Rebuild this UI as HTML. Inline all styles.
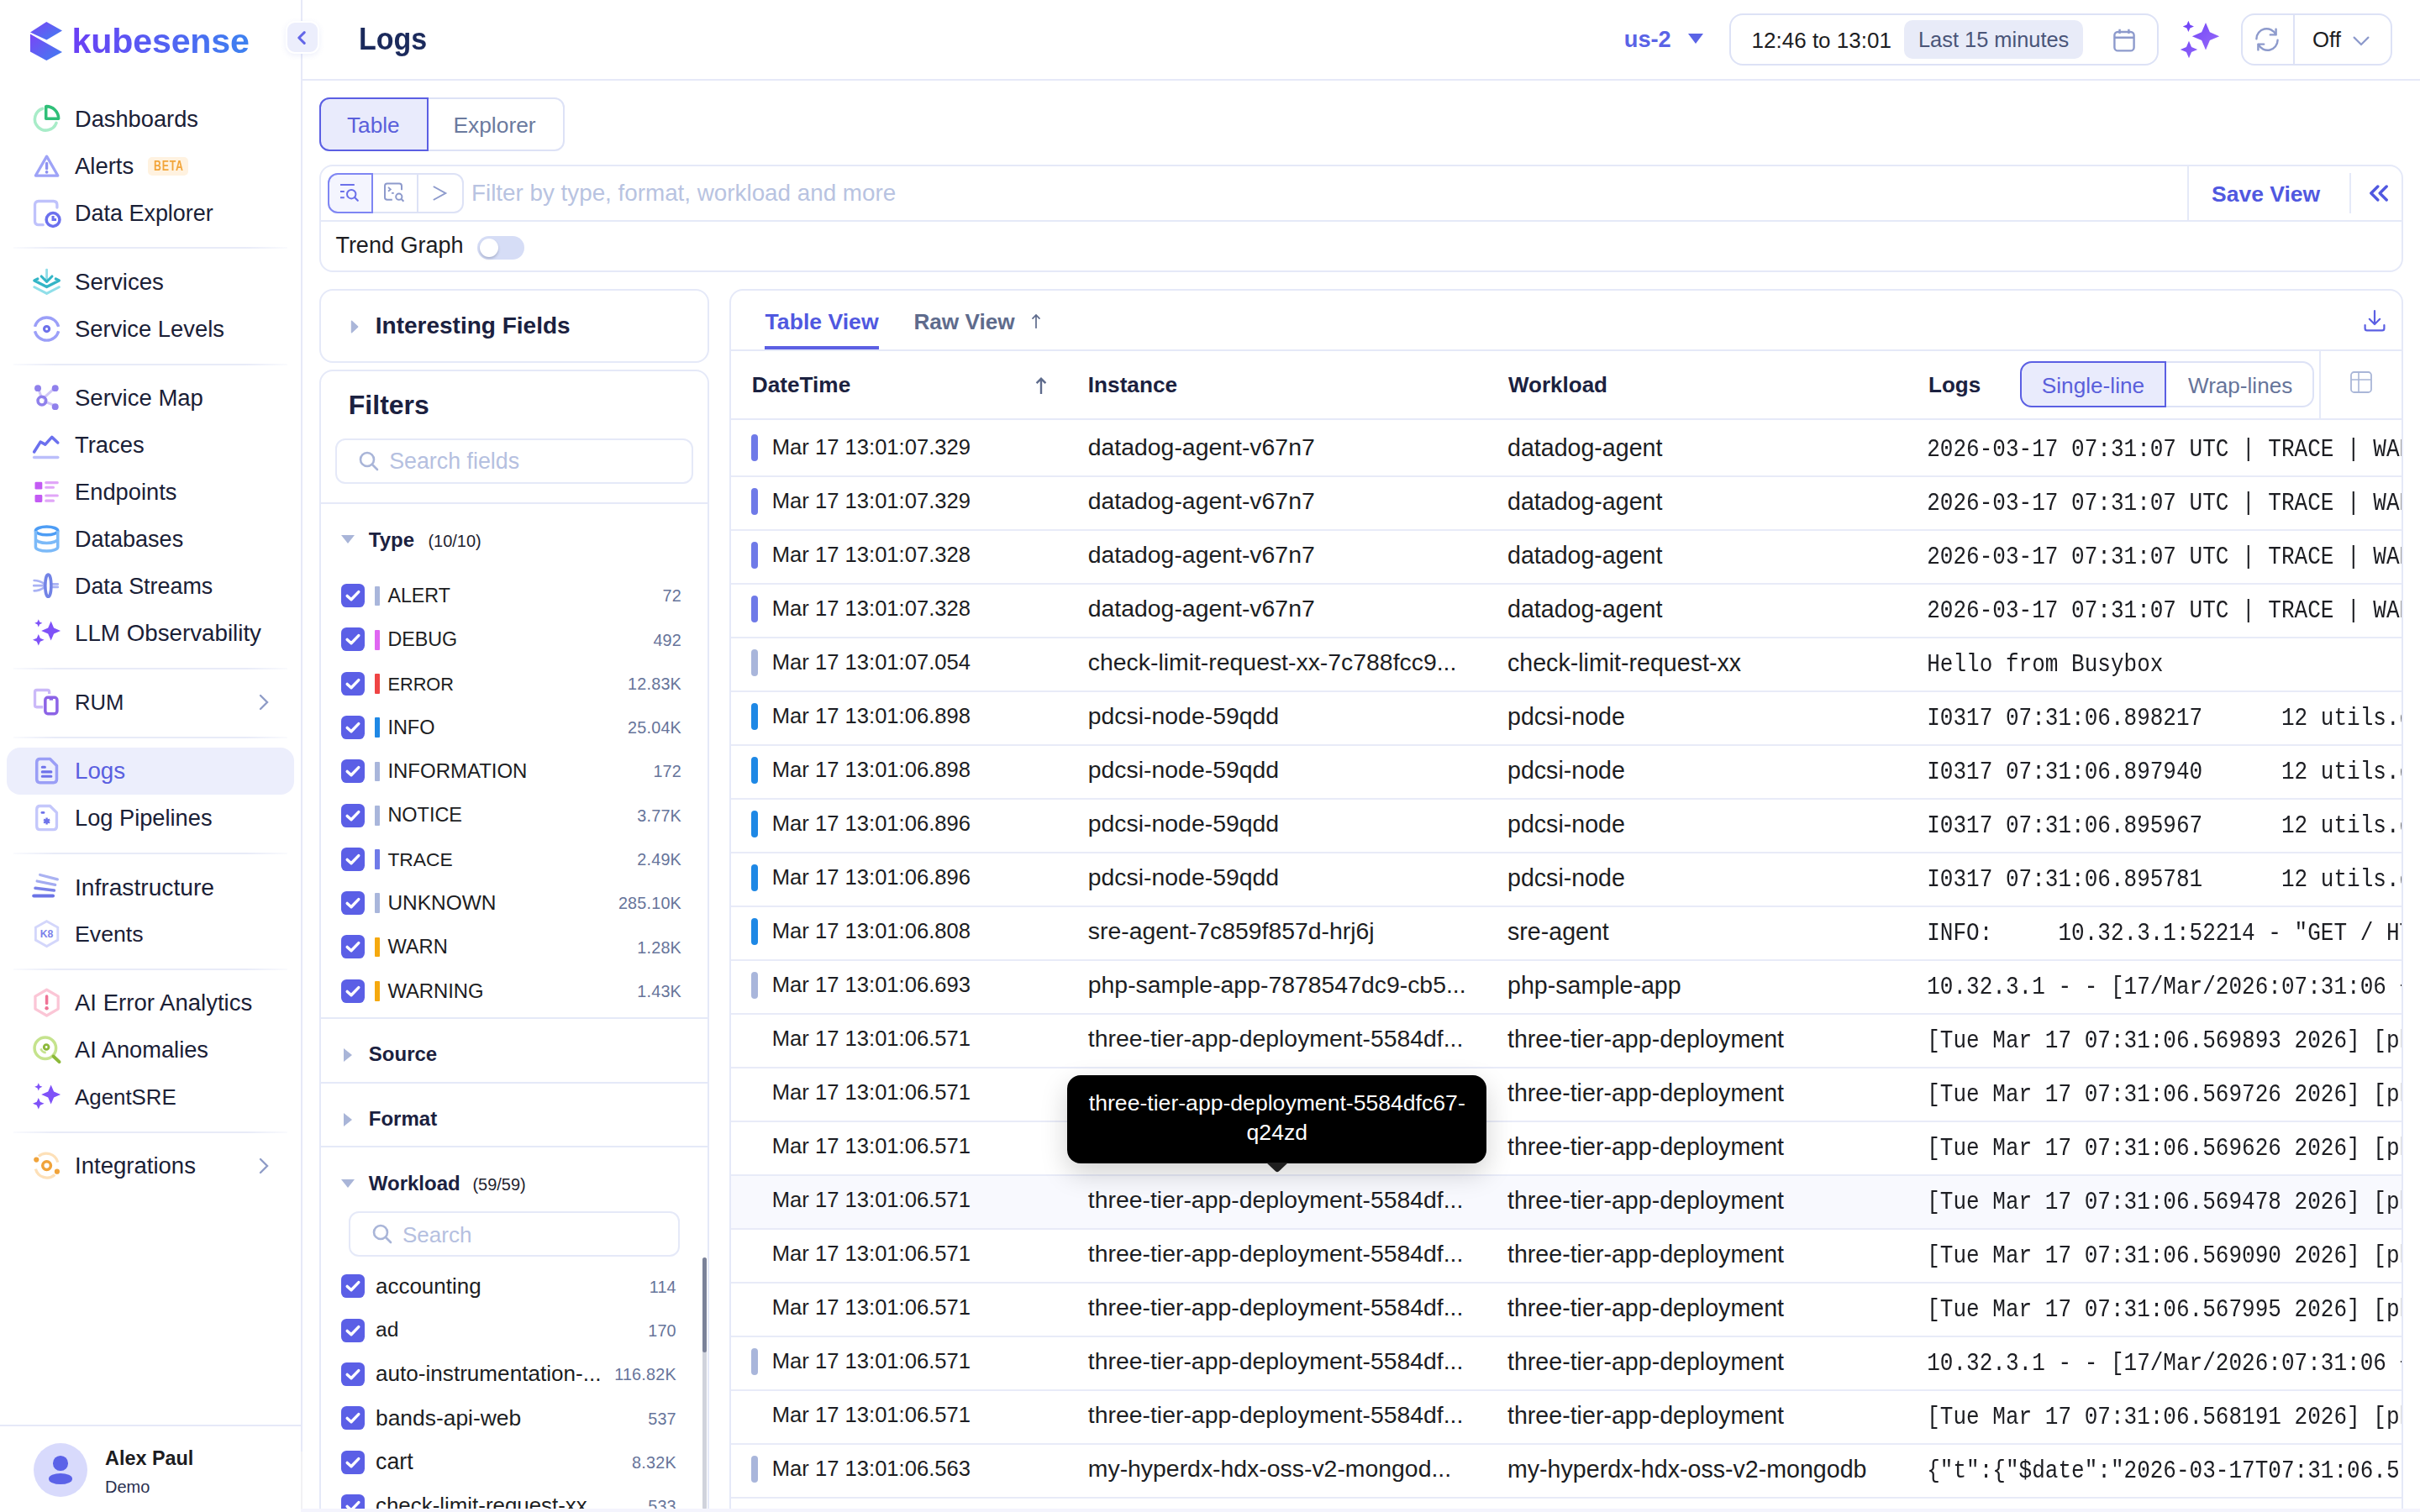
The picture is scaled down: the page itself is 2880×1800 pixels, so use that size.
<!DOCTYPE html>
<html><head><meta charset="utf-8">
<style>
*{box-sizing:border-box;margin:0;padding:0}
html,body{width:2880px;height:1800px;overflow:hidden;background:#fff}
body{font-family:"Liberation Sans",sans-serif;color:#1b2036}
#root{position:relative;width:1440px;height:900px;zoom:2;overflow:hidden;background:#fff}
.abs{position:absolute}
.t{position:absolute;white-space:nowrap;line-height:1}
svg{display:block}
/* sidebar */
#side{position:absolute;left:0;top:0;width:180px;height:900px;border-right:1px solid #e6e9f8;background:#fff}
.nav{position:absolute;left:0;width:179px;height:28px}
.nav .ic{position:absolute;left:19.2px;top:5.2px;width:17.6px;height:17.6px}
.nav .lb{position:absolute;left:44.5px;top:7px;font-size:13.5px;line-height:14px;color:#1a2036;white-space:nowrap}
.sep{position:absolute;left:8px;width:163px;height:1px;background:linear-gradient(90deg,rgba(230,234,248,0.2),#e8ebf8 15%,#e8ebf8 85%,rgba(230,234,248,0.2))}
.chev{position:absolute;left:154px;top:9px}
</style></head>
<body><div id="root">

<!-- SIDEBAR -->
<div id="side">
  <!-- logo -->
  <svg class="abs" style="left:18px;top:13px" width="19" height="23" viewBox="0 0 38 46">
    <defs><linearGradient id="lg1" x1="0" y1="0" x2="1" y2="1"><stop offset="0" stop-color="#7a45f6"/><stop offset="1" stop-color="#3f7ff0"/></linearGradient></defs>
    <path d="M0 12.5 L19.3 0 L38 10.5 L19.5 21.5 Z" fill="url(#lg1)"/>
    <path d="M0 14.5 L38 36 L19.3 46 L0 35.5 Z" fill="url(#lg1)"/>
  </svg>
  <div class="t" style="left:42.8px;top:13px;font-size:20.6px;font-weight:700;letter-spacing:-0.1px;background:linear-gradient(90deg,#6a3ff5,#3d82f0);-webkit-background-clip:text;background-clip:text;color:transparent;line-height:23px">kubesense</div>

  <div class="nav" style="top:57px"><svg class="ic" viewBox="0 0 16 16"><path d="M13.2 10.2 A6 6 0 1 1 5.8 2.4" fill="none" stroke="#a8ecc8" stroke-width="1.6" stroke-linecap="round"/><path d="M7.6 1.2 A6.6 6.6 0 0 1 14.4 7.8 L7.6 7.8 Z" fill="none" stroke="#2fbf78" stroke-width="1.6" stroke-linejoin="round"/></svg><div class="lb" style="font-size:13.63px;top:6.95px;">Dashboards</div></div>
  <div class="nav" style="top:85px"><svg class="ic" viewBox="0 0 16 16"><path d="M8 2.8 L14 13.2 H2 Z" fill="none" stroke="#9ea3f7" stroke-width="1.5" stroke-linejoin="round"/><path d="M8 6.6 V9.4" stroke="#8c90f0" stroke-width="1.5" stroke-linecap="round"/><circle cx="8" cy="11.3" r="0.85" fill="#8c90f0"/></svg><div class="lb" style="font-size:13.73px;top:6.92px;">Alerts</div>
    <div class="abs" style="left:88px;top:8.5px;width:24px;height:11px;background:#fff2e0;border-radius:2.5px"></div>
    <div class="t" style="left:91.7px;top:9.9px;font-size:7.9px;font-weight:700;color:#f2a53a;letter-spacing:0.5px;transform:scaleX(0.78);transform-origin:left">BETA</div>
  </div>
  <div class="nav" style="top:113px"><svg class="ic" viewBox="0 0 16 16"><path d="M6 14.4 H3.6 Q1.6 14.4 1.6 12.4 V3.6 Q1.6 1.6 3.6 1.6 H11.6 Q13.6 1.6 13.6 3.6 V5" fill="none" stroke="#bfc2fb" stroke-width="1.5" stroke-linecap="round"/><circle cx="11.4" cy="11.6" r="3.6" fill="none" stroke="#6b70ee" stroke-width="1.6"/><path d="M11.4 9.6 V11.6 H13.2" fill="none" stroke="#6b70ee" stroke-width="1.4"/></svg><div class="lb" style="font-size:13.48px;top:7.01px;">Data Explorer</div></div>
  <div class="sep" style="top:147px"></div>

  <div class="nav" style="top:154px"><svg class="ic" viewBox="0 0 16 16"><path d="M8 1.4 V6.6" fill="none" stroke="#8fdde8" stroke-width="1.3" stroke-linecap="round"/><path d="M5.1 5 L8 7.9 L10.9 5" fill="none" stroke="#33b5c6" stroke-width="1.4" stroke-linecap="round" stroke-linejoin="round"/><path d="M3.1 6.4 L1.3 7.3 L8 10.7 L14.7 7.3 L12.9 6.4" fill="none" stroke="#33b5c6" stroke-width="1.5" stroke-linecap="round" stroke-linejoin="round"/><path d="M1.3 10.8 L8 14.3 L14.7 10.8" fill="none" stroke="#90dfe9" stroke-width="1.4" stroke-linecap="round" stroke-linejoin="round"/></svg><div class="lb" style="font-size:13.82px;top:6.89px;">Services</div></div>
  <div class="nav" style="top:182px"><svg class="ic" viewBox="0 0 16 16"><path d="M1.6 6.8 A6.6 6.6 0 0 1 14.4 6.8 M14.4 9.2 A6.6 6.6 0 0 1 1.6 9.2" fill="none" stroke="#9b9ff8" stroke-width="1.5"/><circle cx="8" cy="8" r="1.4" fill="none" stroke="#6e72ea" stroke-width="1.4"/></svg><div class="lb" style="font-size:13.68px;top:6.94px;">Service Levels</div></div>
  <div class="sep" style="top:216.5px"></div>

  <div class="nav" style="top:223px"><svg class="ic" viewBox="0 0 16 16"><path d="M3.5 3 L5 7.5 M5.8 8.6 L12.5 2.6 M6.4 9.8 L12.4 12.2" stroke="#d1c8f7" stroke-width="1.4"/><circle cx="3.2" cy="2.8" r="1.8" fill="#8f80ec"/><circle cx="12.6" cy="2.8" r="1.8" fill="#8f80ec"/><circle cx="12.6" cy="12.8" r="1.8" fill="#8f80ec"/><circle cx="5.4" cy="9.6" r="2.2" fill="none" stroke="#8f80ec" stroke-width="1.6"/></svg><div class="lb" style="font-size:13.76px;top:6.91px;">Service Map</div></div>
  <div class="nav" style="top:251px"><svg class="ic" viewBox="0 0 16 16"><path d="M1.2 11.8 L4.6 6.4 L7.2 7.8 L10.8 3.8 L14 6.8" fill="none" stroke="#6b70ee" stroke-width="1.6" stroke-linejoin="round" stroke-linecap="round"/><path d="M1.2 14.8 H14" stroke="#bbbefb" stroke-width="1.6" stroke-linecap="round"/></svg><div class="lb" style="font-size:13.71px;top:6.93px;">Traces</div></div>
  <div class="nav" style="top:279px"><svg class="ic" viewBox="0 0 16 16"><rect x="1.6" y="2.6" width="4" height="4" rx="0.6" fill="#c35af4"/><rect x="1.6" y="9.6" width="4" height="4" rx="0.6" fill="#c35af4"/><path d="M7.6 3 H13.8 M7.6 5.6 H11.6 M7.6 10 H13.8 M7.6 12.8 H11.6" stroke="#e1a6f8" stroke-width="1.4" stroke-linecap="round"/></svg><div class="lb" style="font-size:13.65px;top:6.95px;">Endpoints</div></div>
  <div class="nav" style="top:307px"><svg class="ic" viewBox="0 0 16 16"><ellipse cx="8" cy="3.6" rx="6" ry="2.2" fill="none" stroke="#4d9df5" stroke-width="1.6"/><path d="M2 3.6 V12.4 A6 2.2 0 0 0 14 12.4 V3.6 M2 8 A6 2.2 0 0 0 14 8" fill="none" stroke="#7cbaf8" stroke-width="1.6"/></svg><div class="lb" style="font-size:13.51px;top:7.00px;">Databases</div></div>
  <div class="nav" style="top:335px"><svg class="ic" viewBox="0 0 16 16"><path d="M1.2 5 Q4 5 6.6 6.8 M1 7.8 H7 M1.2 10.6 Q4 10.6 6.6 8.8 M10.6 7 H14 M10.6 8.6 H14" fill="none" stroke="#a9b2f4" stroke-width="1.2" stroke-linecap="round"/><ellipse cx="8.8" cy="7.8" rx="1.6" ry="6" fill="none" stroke="#7283e6" stroke-width="1.6"/></svg><div class="lb" style="font-size:13.43px;top:7.02px;">Data Streams</div></div>
  <div class="nav" style="top:363px"><svg class="ic" viewBox="0 0 16 16" style="overflow:visible"><path d="M10.30 1.60 L11.86 5.24 L15.50 6.80 L11.86 8.36 L10.30 12.00 L8.74 8.36 L5.10 6.80 L8.74 5.24Z M3.55 0.55 L4.18 2.02 L5.65 2.65 L4.18 3.28 L3.55 4.75 L2.92 3.28 L1.45 2.65 L2.92 2.02Z M3.55 8.60 L4.48 10.77 L6.65 11.70 L4.48 12.63 L3.55 14.80 L2.62 12.63 L0.45 11.70 L2.62 10.77Z" fill="#7f52f8"/></svg><div class="lb" style="font-size:13.87px;top:6.87px;">LLM Observability</div></div>
  <div class="sep" style="top:397.5px"></div>

  <div class="nav" style="top:404px"><svg class="ic" viewBox="0 0 16 16"><path d="M9.4 3.6 V2.6 Q9.4 1.6 8.4 1.6 H2.6 Q1.6 1.6 1.6 2.6 V9.8 Q1.6 10.8 2.6 10.8 H6" fill="none" stroke="#cbb9f8" stroke-width="1.5"/><rect x="7.2" y="5.6" width="6.4" height="8.8" rx="1.4" fill="none" stroke="#8c63e6" stroke-width="1.6"/><path d="M9.4 6.4 H11.4" stroke="#8c63e6" stroke-width="1.4"/></svg><div class="lb" style="font-size:12.82px;top:7.24px;">RUM</div><svg class="chev" width="6" height="10" viewBox="0 0 6 10"><path d="M1 1 L5 5 L1 9" fill="none" stroke="#8f9cc7" stroke-width="1.2" stroke-linecap="round"/></svg></div>
  <div class="sep" style="top:438.5px"></div>

  <div class="abs" style="left:4px;top:445px;width:171px;height:28px;border-radius:8px;background:#eceefc"></div>
  <div class="nav" style="top:445px"><svg class="ic" viewBox="0 0 16 16"><path d="M9.8 1.6 H4.4 Q2.6 1.6 2.6 3.4 V12.6 Q2.6 14.4 4.4 14.4 H11.6 Q13.4 14.4 13.4 12.6 V5.2 Z" fill="none" stroke="#9a9ef6" stroke-width="1.6" stroke-linejoin="round"/><path d="M5.6 6 H7 M5.6 8.6 H10.4 M5.6 11 H10.4" stroke="#6e72ea" stroke-width="1.4" stroke-linecap="round"/></svg><div class="lb" style="font-size:13.88px;top:6.87px;color:#5a5fe0">Logs</div></div>
  <div class="nav" style="top:473px"><svg class="ic" viewBox="0 0 16 16"><path d="M9.8 1.6 H4.4 Q2.6 1.6 2.6 3.4 V12.6 Q2.6 14.4 4.4 14.4 H11.6 Q13.4 14.4 13.4 12.6 V5.2 Z" fill="none" stroke="#c4c7fb" stroke-width="1.5" stroke-linejoin="round"/><path d="M5.4 5.2 H6.4" stroke="#6e72ea" stroke-width="1.2" stroke-linecap="round"/><path d="M8 8 V11.6 M6.4 8.9 L9.6 10.7 M6.4 10.7 L9.6 8.9" stroke="#6e72ea" stroke-width="1.1"/></svg><div class="lb" style="font-size:13.62px;top:6.96px;">Log Pipelines</div></div>
  <div class="sep" style="top:507.5px"></div>

  <div class="nav" style="top:514px"><svg class="ic" viewBox="0 0 16 16"><path d="M4.4 1.6 L13.8 4" stroke="#aab2f2" stroke-width="1.5" stroke-linecap="round"/><path d="M2.8 5 L12.6 7" stroke="#a3abf1" stroke-width="1.5" stroke-linecap="round"/><path d="M1.8 8.8 L12 10" stroke="#7a82e8" stroke-width="1.6" stroke-linecap="round"/><path d="M1 13 H11.4" stroke="#6b73e6" stroke-width="1.8" stroke-linecap="round"/></svg><div class="lb" style="font-size:14.09px;top:6.80px;">Infrastructure</div></div>
  <div class="nav" style="top:542px"><svg class="ic" viewBox="0 0 16 16"><path d="M8 1.2 L14 4.6 V11.4 L8 14.8 L2 11.4 V4.6 Z" fill="none" stroke="#d3d6fb" stroke-width="1.3"/><text x="8" y="10.2" text-anchor="middle" font-size="5.6" font-weight="700" fill="#7d82ea" font-family="Liberation Sans">K8</text></svg><div class="lb" style="font-size:13.35px;top:7.05px;">Events</div></div>
  <div class="sep" style="top:576.5px"></div>

  <div class="nav" style="top:583px"><svg class="ic" viewBox="0 0 16 16"><path d="M8 1 L14.2 4.6 V11.4 L8 15 L1.8 11.4 V4.6 Z" fill="none" stroke="#fbc6d6" stroke-width="1.5" stroke-linejoin="round"/><path d="M8 4.6 V8.4" stroke="#ef7396" stroke-width="1.6" stroke-linecap="round"/><circle cx="8" cy="11" r="1" fill="#ef7396"/></svg><div class="lb" style="font-size:13.78px;top:6.90px;">AI Error Analytics</div></div>
  <div class="nav" style="top:611px"><svg class="ic" viewBox="0 0 16 16"><circle cx="7.2" cy="7.2" r="5.8" fill="none" stroke="#c5e38d" stroke-width="1.6"/><path d="M11.6 11.6 L14.8 14.6" stroke="#8cb93a" stroke-width="1.8" stroke-linecap="round"/><circle cx="7.8" cy="6.6" r="1.3" fill="none" stroke="#8cb93a" stroke-width="1.3"/><path d="M4.8 7.4 Q5.4 9.4 7.6 9.6" fill="none" stroke="#c5e38d" stroke-width="1.2"/></svg><div class="lb" style="font-size:13.62px;top:6.96px;">AI Anomalies</div></div>
  <div class="nav" style="top:639px"><svg class="ic" viewBox="0 0 16 16" style="overflow:visible"><path d="M10.30 1.60 L11.86 5.24 L15.50 6.80 L11.86 8.36 L10.30 12.00 L8.74 8.36 L5.10 6.80 L8.74 5.24Z M3.55 0.55 L4.18 2.02 L5.65 2.65 L4.18 3.28 L3.55 4.75 L2.92 3.28 L1.45 2.65 L2.92 2.02Z M3.55 8.60 L4.48 10.77 L6.65 11.70 L4.48 12.63 L3.55 14.80 L2.62 12.63 L0.45 11.70 L2.62 10.77Z" fill="#7f52f8"/></svg><div class="lb" style="font-size:12.93px;top:7.20px;">AgentSRE</div></div>
  <div class="sep" style="top:673.5px"></div>

  <div class="nav" style="top:680px"><svg class="ic" viewBox="0 0 16 16"><path d="M3.6 3 A6.4 6.4 0 0 1 14 6.2 M12.4 13 A6.4 6.4 0 0 1 2 9.8" fill="none" stroke="#fde0b8" stroke-width="1.5"/><circle cx="8" cy="8" r="2.2" fill="none" stroke="#f0a33a" stroke-width="1.6"/><circle cx="2.4" cy="4.8" r="1.4" fill="#f0a33a"/><circle cx="13.6" cy="11.2" r="1.4" fill="#f0a33a"/></svg><div class="lb" style="font-size:13.78px;top:6.90px;">Integrations</div><svg class="chev" width="6" height="10" viewBox="0 0 6 10"><path d="M1 1 L5 5 L1 9" fill="none" stroke="#8f9cc7" stroke-width="1.2" stroke-linecap="round"/></svg></div>

  <!-- footer -->
  <div class="abs" style="left:0;top:848px;width:179px;height:1px;background:#e6e9f8"></div>
  <div class="abs" style="left:20px;top:859px;width:32px;height:32px;border-radius:50%;background:#d8dafc"></div>
  <div class="abs" style="left:31.6px;top:866.7px;width:8.8px;height:8.8px;border-radius:50%;background:#5b62e8"></div>
  <div class="abs" style="left:29px;top:877.2px;width:14px;height:6.3px;border-radius:50%;background:#5b62e8"></div>
  <div class="t" style="left:62.5px;top:862.7px;font-size:11.7px;font-weight:700;color:#1c1c1f">Alex Paul</div>
  <div class="t" style="left:62.5px;top:880px;font-size:10px;color:#2a3050">Demo</div>
</div>

<!-- collapse button -->
<div class="abs" style="left:169.8px;top:12.6px;width:20px;height:19.6px;border-radius:5.5px;background:#eceefc;border:1px solid #fff;box-shadow:0 1px 3px rgba(110,120,220,0.12)"></div>
<svg class="abs" style="left:176.5px;top:18.5px" width="6" height="8" viewBox="0 0 6 8"><path d="M4.6 0.8 L1.4 4 L4.6 7.2" fill="none" stroke="#6366e8" stroke-width="1.5" stroke-linecap="round" stroke-linejoin="round"/></svg>

<!-- MAIN -->

<!-- HEADER -->
<div class="abs" style="left:180px;top:47px;width:1260px;height:1px;background:#e6e9f8"></div>
<div class="t" style="left:213.3px;top:14.35px;font-size:18.3px;font-weight:700;color:#1b2a5c;transform:scaleX(0.93);transform-origin:left">Logs</div>

<div class="t" style="left:966.4px;top:16.4px;font-size:13.6px;font-weight:700;color:#5a63e6">us-2</div>
<svg class="abs" style="left:1004.5px;top:20px" width="9" height="6" viewBox="0 0 9 6"><path d="M0 0 H9 L4.5 6 Z" fill="#5a63e6"/></svg>

<div class="abs" style="left:1029px;top:7.8px;width:255.5px;height:31px;border:1px solid #dde2f6;border-radius:8px"></div>
<div class="t" style="left:1042.3px;top:17.5px;font-size:13px;color:#1c1d22">12:46 to 13:01</div>
<div class="abs" style="left:1133px;top:11.8px;width:106.5px;height:23.3px;border-radius:5px;background:#e8ebf8"></div>
<div class="t" style="left:1141.5px;top:17.7px;font-size:12.7px;color:#4a5578">Last 15 minutes</div>
<svg class="abs" style="left:1257.5px;top:17px" width="13" height="14" viewBox="0 0 13 14"><rect x="0.7" y="2" width="11.6" height="11.2" rx="2" fill="none" stroke="#8d9acc" stroke-width="1.2"/><path d="M0.7 5.4 H12.3 M3.8 0.4 V3 M9.2 0.4 V3" stroke="#8d9acc" stroke-width="1.2"/></svg>

<svg class="abs" style="left:1296px;top:12px" width="26" height="24" viewBox="0 0 26 24" style="overflow:visible"><defs><linearGradient id="sp" x1="0" y1="0" x2="1" y2="1"><stop offset="0" stop-color="#6a3df6"/><stop offset="1" stop-color="#9e72f9"/></linearGradient></defs><path d="M16.50 1.50 L18.93 7.17 L24.60 9.60 L18.93 12.03 L16.50 17.70 L14.07 12.03 L8.40 9.60 L14.07 7.17Z M6.20 0.40 L7.19 2.71 L9.50 3.70 L7.19 4.69 L6.20 7.00 L5.21 4.69 L2.90 3.70 L5.21 2.71Z M6.50 12.40 L8.03 15.97 L11.60 17.50 L8.03 19.03 L6.50 22.60 L4.97 19.03 L1.40 17.50 L4.97 15.97Z" fill="url(#sp)"/></svg>

<div class="abs" style="left:1333.5px;top:7.8px;width:90px;height:31px;border:1px solid #dde2f6;border-radius:8px"></div>
<div class="abs" style="left:1364.3px;top:8px;width:1px;height:30.5px;background:#dde2f6"></div>
<svg class="abs" style="left:1341.5px;top:16.5px" width="15" height="14" viewBox="0 0 15 14"><path d="M1.2 6.6 A6 6 0 0 1 12.6 4 M13.8 7.4 A6 6 0 0 1 2.4 10" fill="none" stroke="#8d9acc" stroke-width="1.2" stroke-linecap="round"/><path d="M12.8 0.8 V4.2 H9.4 M2.2 13.2 V9.8 H5.6" fill="none" stroke="#8d9acc" stroke-width="1.2" stroke-linecap="round" stroke-linejoin="round"/></svg>
<div class="t" style="left:1376px;top:17.6px;font-size:12.9px;color:#1c1d22">Off</div>
<svg class="abs" style="left:1400px;top:21.5px" width="10" height="6" viewBox="0 0 10 6"><path d="M0.8 0.8 L5 5 L9.2 0.8" fill="none" stroke="#8d9acc" stroke-width="1.1" stroke-linecap="round"/></svg>

<!-- TABLE / EXPLORER TOGGLE -->
<div class="abs" style="left:190px;top:58px;width:146px;height:32px;border:1px solid #dde2f6;border-radius:6px"></div>
<div class="abs" style="left:190px;top:58px;width:65px;height:32px;border:1px solid #5b5fe3;border-radius:6px 0 0 6px;background:#e9ebfc"></div>
<div class="t" style="left:206.5px;top:67.8px;font-size:13.1px;color:#5a5fdb">Table</div>
<div class="t" style="left:269.7px;top:67.8px;font-size:13.2px;color:#6b7a9e">Explorer</div>

<!-- FILTER BAR -->
<div class="abs" style="left:190px;top:98px;width:1240px;height:64px;border:1px solid #e5e9f8;border-radius:8px"></div>
<div class="abs" style="left:191px;top:131px;width:1238px;height:1px;background:#e5e9f8"></div>
<div class="abs" style="left:195px;top:103px;width:81px;height:24px;border:1px solid #dde2f6;border-radius:6px"></div>
<div class="abs" style="left:195px;top:103px;width:27px;height:24px;border:1px solid #7f86f3;border-radius:6px 0 0 6px;background:#f4f5fe"></div>
<div class="abs" style="left:248px;top:103.5px;width:1px;height:22.5px;background:#dde2f6"></div>
<svg class="abs" style="left:201.5px;top:109px" width="14" height="12" viewBox="0 0 14 12"><path d="M1 1 H9.4 M1 5 H3.4 M1 8.6 H3.4" stroke="#6b70ea" stroke-width="1"/><circle cx="7.6" cy="6.6" r="2.6" fill="none" stroke="#6b70ea" stroke-width="1"/><path d="M9.5 8.5 L11.4 10.4" stroke="#6b70ea" stroke-width="1.1" stroke-linecap="round"/></svg>
<svg class="abs" style="left:228px;top:108.5px" width="14" height="13" viewBox="0 0 14 13"><path d="M5.4 10.4 H2.4 Q1 10.4 1 9 V2.2 Q1 0.8 2.4 0.8 H9.6 Q11 0.8 11 2.2 V4.6" fill="none" stroke="#8d9acc" stroke-width="1"/><path d="M3 3 L4.4 4.2 L3 5.4 M5 6.4 H6.4" fill="none" stroke="#8d9acc" stroke-width="0.9"/><circle cx="9.4" cy="8.6" r="1.8" fill="none" stroke="#8d9acc" stroke-width="1"/><path d="M10.7 9.9 L12.2 11.4" stroke="#8d9acc" stroke-width="1"/></svg>
<svg class="abs" style="left:256.5px;top:110px" width="10" height="10" viewBox="0 0 10 10"><path d="M1.4 1 L8.6 5 L1.4 9" fill="none" stroke="#8d9acc" stroke-width="1"/></svg>
<div class="t" style="left:280.5px;top:108.0px;font-size:13.9px;color:#b8c3e1">Filter by type, format, workload and more</div>
<div class="abs" style="left:1301.5px;top:98.8px;width:1px;height:32.5px;background:#e5e9f8"></div>
<div class="t" style="left:1316px;top:108.8px;font-size:13.25px;font-weight:700;color:#5058e0">Save View</div>
<div class="abs" style="left:1398px;top:103px;width:1px;height:24px;background:#e5e9f8"></div>
<svg class="abs" style="left:1409.5px;top:110px" width="12" height="10" viewBox="0 0 12 10"><path d="M5.4 1 L1.4 5 L5.4 9 M10.6 1 L6.6 5 L10.6 9" fill="none" stroke="#5058e0" stroke-width="1.7" stroke-linecap="round" stroke-linejoin="round"/></svg>
<div class="t" style="left:199.7px;top:139.5px;font-size:13.5px;color:#1c1d22">Trend Graph</div>
<div class="abs" style="left:284px;top:140.6px;width:28px;height:13.7px;border-radius:7px;background:#d6ddf6"></div>
<div class="abs" style="left:285.5px;top:142px;width:11px;height:11px;border-radius:50%;background:#fff;box-shadow:0 1px 1.5px rgba(40,50,90,0.25)"></div>

<div id="main">
<div class="abs" style="left:190.00px;top:172.00px;width:232.00px;height:44.00px;border:1px solid #e5e9f8;border-radius:8px"></div>
<svg class="abs" style="left:208.5px;top:190.3px" width="5" height="8" viewBox="0 0 5 8"><path d="M0.4 0.6 Q0.4 0 1 0.4 L4.5 3.6 Q5 4 4.5 4.4 L1 7.6 Q0.4 8 0.4 7.4Z" fill="#aab6d9"/></svg>
<div class="t" style="left:223.40px;top:187.15px;font-size:14px;font-weight:700;color:#1b2140;">Interesting Fields</div>
<div class="abs" style="left:190.00px;top:220.00px;width:232.00px;height:700.00px;border:1px solid #e5e9f8;border-radius:8px"></div>
<div class="t" style="left:207.40px;top:233.06px;font-size:16px;font-weight:700;color:#1b2140;">Filters</div>
<div class="abs" style="left:199.50px;top:261.20px;width:213.00px;height:26.80px;border:1px solid #e5e9f8;border-radius:6px"></div>
<svg class="abs" style="left:213.3px;top:268.5px" width="12" height="12" viewBox="0 0 12 12"><circle cx="5" cy="5" r="4" fill="none" stroke="#a9b5d8" stroke-width="1.3"/><path d="M8 8 L11 11" stroke="#a9b5d8" stroke-width="1.3" stroke-linecap="round"/></svg>
<div class="t" style="left:231.60px;top:268.06px;font-size:13.4px;color:#b5c0e0;">Search fields</div>
<div class="abs" style="left:191.00px;top:298.80px;width:230.00px;height:1.00px;background:#e5e9f8"></div>
<svg class="abs" style="left:203px;top:318.7px" width="8" height="5" viewBox="0 0 8 5"><path d="M0 0 H8 L4 5Z" fill="#a9b5d8"/></svg>
<div class="t" style="left:219.40px;top:315.44px;font-size:12px;font-weight:700;color:#1b2140;">Type</div>
<div class="t" style="left:254.70px;top:317.14px;font-size:10px;color:#1f2430;">(10/10)</div>
<div class="abs" style="left:203.2px;top:347.60px"><svg width="14" height="14" viewBox="0 0 14 14"><rect width="14" height="14" rx="3.2" fill="#5b5fe6"/><path d="M3.6 7.2 L6 9.4 L10.4 4.8" fill="none" stroke="#fff" stroke-width="1.7" stroke-linecap="round" stroke-linejoin="round"/></svg></div>
<div class="abs" style="left:223.00px;top:348.80px;width:3.00px;height:11.90px;background:#a9b6db;border-radius:0.5px"></div>
<div class="t" style="left:230.70px;top:348.97px;font-size:11.61px;color:#1c1d22;">ALERT</div>
<div class="t" style="right:1034.50px;top:350.22px;font-size:9.9px;color:#66749a;letter-spacing:0.1px">72</div>
<div class="abs" style="left:203.2px;top:373.73px"><svg width="14" height="14" viewBox="0 0 14 14"><rect width="14" height="14" rx="3.2" fill="#5b5fe6"/><path d="M3.6 7.2 L6 9.4 L10.4 4.8" fill="none" stroke="#fff" stroke-width="1.7" stroke-linecap="round" stroke-linejoin="round"/></svg></div>
<div class="abs" style="left:223.00px;top:374.93px;width:3.00px;height:11.90px;background:#e066f2;border-radius:0.5px"></div>
<div class="t" style="left:230.70px;top:375.07px;font-size:11.65px;color:#1c1d22;">DEBUG</div>
<div class="t" style="right:1034.50px;top:376.35px;font-size:9.9px;color:#66749a;letter-spacing:0.1px">492</div>
<div class="abs" style="left:203.2px;top:399.86px"><svg width="14" height="14" viewBox="0 0 14 14"><rect width="14" height="14" rx="3.2" fill="#5b5fe6"/><path d="M3.6 7.2 L6 9.4 L10.4 4.8" fill="none" stroke="#fff" stroke-width="1.7" stroke-linecap="round" stroke-linejoin="round"/></svg></div>
<div class="abs" style="left:223.00px;top:401.06px;width:3.00px;height:11.90px;background:#ef4444;border-radius:0.5px"></div>
<div class="t" style="left:230.70px;top:401.84px;font-size:10.89px;color:#1c1d22;">ERROR</div>
<div class="t" style="right:1034.50px;top:402.48px;font-size:9.9px;color:#66749a;letter-spacing:0.1px">12.83K</div>
<div class="abs" style="left:203.2px;top:425.99px"><svg width="14" height="14" viewBox="0 0 14 14"><rect width="14" height="14" rx="3.2" fill="#5b5fe6"/><path d="M3.6 7.2 L6 9.4 L10.4 4.8" fill="none" stroke="#fff" stroke-width="1.7" stroke-linecap="round" stroke-linejoin="round"/></svg></div>
<div class="abs" style="left:223.00px;top:427.19px;width:3.00px;height:11.90px;background:#1e88e5;border-radius:0.5px"></div>
<div class="t" style="left:230.70px;top:427.26px;font-size:11.73px;color:#1c1d22;">INFO</div>
<div class="t" style="right:1034.50px;top:428.61px;font-size:9.9px;color:#66749a;letter-spacing:0.1px">25.04K</div>
<div class="abs" style="left:203.2px;top:452.12px"><svg width="14" height="14" viewBox="0 0 14 14"><rect width="14" height="14" rx="3.2" fill="#5b5fe6"/><path d="M3.6 7.2 L6 9.4 L10.4 4.8" fill="none" stroke="#fff" stroke-width="1.7" stroke-linecap="round" stroke-linejoin="round"/></svg></div>
<div class="abs" style="left:223.00px;top:453.32px;width:3.00px;height:11.90px;background:#a9b6db;border-radius:0.5px"></div>
<div class="t" style="left:230.70px;top:453.17px;font-size:11.99px;color:#1c1d22;">INFORMATION</div>
<div class="t" style="right:1034.50px;top:454.74px;font-size:9.9px;color:#66749a;letter-spacing:0.1px">172</div>
<div class="abs" style="left:203.2px;top:478.25px"><svg width="14" height="14" viewBox="0 0 14 14"><rect width="14" height="14" rx="3.2" fill="#5b5fe6"/><path d="M3.6 7.2 L6 9.4 L10.4 4.8" fill="none" stroke="#fff" stroke-width="1.7" stroke-linecap="round" stroke-linejoin="round"/></svg></div>
<div class="abs" style="left:223.00px;top:479.45px;width:3.00px;height:11.90px;background:#a9b6db;border-radius:0.5px"></div>
<div class="t" style="left:230.70px;top:479.52px;font-size:11.73px;color:#1c1d22;">NOTICE</div>
<div class="t" style="right:1034.50px;top:480.87px;font-size:9.9px;color:#66749a;letter-spacing:0.1px">3.77K</div>
<div class="abs" style="left:203.2px;top:504.38px"><svg width="14" height="14" viewBox="0 0 14 14"><rect width="14" height="14" rx="3.2" fill="#5b5fe6"/><path d="M3.6 7.2 L6 9.4 L10.4 4.8" fill="none" stroke="#fff" stroke-width="1.7" stroke-linecap="round" stroke-linejoin="round"/></svg></div>
<div class="abs" style="left:223.00px;top:505.58px;width:3.00px;height:11.90px;background:#6f7ae8;border-radius:0.5px"></div>
<div class="t" style="left:230.70px;top:505.91px;font-size:11.42px;color:#1c1d22;">TRACE</div>
<div class="t" style="right:1034.50px;top:507.00px;font-size:9.9px;color:#66749a;letter-spacing:0.1px">2.49K</div>
<div class="abs" style="left:203.2px;top:530.51px"><svg width="14" height="14" viewBox="0 0 14 14"><rect width="14" height="14" rx="3.2" fill="#5b5fe6"/><path d="M3.6 7.2 L6 9.4 L10.4 4.8" fill="none" stroke="#fff" stroke-width="1.7" stroke-linecap="round" stroke-linejoin="round"/></svg></div>
<div class="abs" style="left:223.00px;top:531.71px;width:3.00px;height:11.90px;background:#a9b6db;border-radius:0.5px"></div>
<div class="t" style="left:230.70px;top:531.35px;font-size:12.24px;color:#1c1d22;">UNKNOWN</div>
<div class="t" style="right:1034.50px;top:533.13px;font-size:9.9px;color:#66749a;letter-spacing:0.1px">285.10K</div>
<div class="abs" style="left:203.2px;top:556.64px"><svg width="14" height="14" viewBox="0 0 14 14"><rect width="14" height="14" rx="3.2" fill="#5b5fe6"/><path d="M3.6 7.2 L6 9.4 L10.4 4.8" fill="none" stroke="#fff" stroke-width="1.7" stroke-linecap="round" stroke-linejoin="round"/></svg></div>
<div class="abs" style="left:223.00px;top:557.84px;width:3.00px;height:11.90px;background:#f5a90f;border-radius:0.5px"></div>
<div class="t" style="left:230.70px;top:557.83px;font-size:11.83px;color:#1c1d22;">WARN</div>
<div class="t" style="right:1034.50px;top:559.26px;font-size:9.9px;color:#66749a;letter-spacing:0.1px">1.28K</div>
<div class="abs" style="left:203.2px;top:582.77px"><svg width="14" height="14" viewBox="0 0 14 14"><rect width="14" height="14" rx="3.2" fill="#5b5fe6"/><path d="M3.6 7.2 L6 9.4 L10.4 4.8" fill="none" stroke="#fff" stroke-width="1.7" stroke-linecap="round" stroke-linejoin="round"/></svg></div>
<div class="abs" style="left:223.00px;top:583.97px;width:3.00px;height:11.90px;background:#f5a90f;border-radius:0.5px"></div>
<div class="t" style="left:230.70px;top:583.89px;font-size:11.91px;color:#1c1d22;">WARNING</div>
<div class="t" style="right:1034.50px;top:585.39px;font-size:9.9px;color:#66749a;letter-spacing:0.1px">1.43K</div>
<div class="abs" style="left:191.00px;top:605.30px;width:230.00px;height:1.00px;background:#e5e9f8"></div>
<svg class="abs" style="left:204.5px;top:624px" width="5" height="8" viewBox="0 0 5 8"><path d="M0 0 L5 4 L0 8Z" fill="#a9b5d8"/></svg>
<div class="t" style="left:219.40px;top:621.54px;font-size:12px;font-weight:700;color:#1b2140;">Source</div>
<div class="abs" style="left:191.00px;top:644.10px;width:230.00px;height:1.00px;background:#e5e9f8"></div>
<svg class="abs" style="left:204.5px;top:662.6px" width="5" height="8" viewBox="0 0 5 8"><path d="M0 0 L5 4 L0 8Z" fill="#a9b5d8"/></svg>
<div class="t" style="left:219.40px;top:660.14px;font-size:12px;font-weight:700;color:#1b2140;">Format</div>
<div class="abs" style="left:191.00px;top:682.10px;width:230.00px;height:1.00px;background:#e5e9f8"></div>
<svg class="abs" style="left:203px;top:701.8px" width="8" height="5" viewBox="0 0 8 5"><path d="M0 0 H8 L4 5Z" fill="#a9b5d8"/></svg>
<div class="t" style="left:219.40px;top:698.54px;font-size:12px;font-weight:700;color:#1b2140;">Workload</div>
<div class="t" style="left:281.20px;top:700.24px;font-size:10px;color:#1f2430;">(59/59)</div>
<div class="abs" style="left:207.40px;top:720.80px;width:197.00px;height:27.20px;border:1px solid #e5e9f8;border-radius:6px"></div>
<svg class="abs" style="left:221.3px;top:728.5px" width="12" height="12" viewBox="0 0 12 12"><circle cx="5" cy="5" r="4" fill="none" stroke="#a9b5d8" stroke-width="1.3"/><path d="M8 8 L11 11" stroke="#a9b5d8" stroke-width="1.3" stroke-linecap="round"/></svg>
<div class="t" style="left:239.50px;top:728.30px;font-size:13px;color:#b5c0e0;">Search</div>
<div class="abs" style="left:191px;top:748.5px;width:230px;height:149.3px;overflow:hidden">
<div class="abs" style="left:12px;top:10.20px"><svg width="14" height="14" viewBox="0 0 14 14"><rect width="14" height="14" rx="3.2" fill="#5b5fe6"/><path d="M3.6 7.2 L6 9.4 L10.4 4.8" fill="none" stroke="#fff" stroke-width="1.7" stroke-linecap="round" stroke-linejoin="round"/></svg></div>
<div class="t" style="left:32.50px;top:10.50px;font-size:12.99px;color:#1c1d22;">accounting</div>
<div class="t" style="right:18.60px;top:12.82px;font-size:9.9px;letter-spacing:0.1px;color:#66749a">114</div>
<div class="abs" style="left:12px;top:36.35px"><svg width="14" height="14" viewBox="0 0 14 14"><rect width="14" height="14" rx="3.2" fill="#5b5fe6"/><path d="M3.6 7.2 L6 9.4 L10.4 4.8" fill="none" stroke="#fff" stroke-width="1.7" stroke-linecap="round" stroke-linejoin="round"/></svg></div>
<div class="t" style="left:32.50px;top:37.22px;font-size:12.32px;color:#1c1d22;">ad</div>
<div class="t" style="right:18.60px;top:38.97px;font-size:9.9px;letter-spacing:0.1px;color:#66749a">170</div>
<div class="abs" style="left:12px;top:62.50px"><svg width="14" height="14" viewBox="0 0 14 14"><rect width="14" height="14" rx="3.2" fill="#5b5fe6"/><path d="M3.6 7.2 L6 9.4 L10.4 4.8" fill="none" stroke="#fff" stroke-width="1.7" stroke-linecap="round" stroke-linejoin="round"/></svg></div>
<div class="t" style="left:32.50px;top:62.74px;font-size:13.06px;color:#1c1d22;">auto-instrumentation-...</div>
<div class="t" style="right:18.60px;top:65.12px;font-size:9.9px;letter-spacing:0.1px;color:#66749a">116.82K</div>
<div class="abs" style="left:12px;top:88.65px"><svg width="14" height="14" viewBox="0 0 14 14"><rect width="14" height="14" rx="3.2" fill="#5b5fe6"/><path d="M3.6 7.2 L6 9.4 L10.4 4.8" fill="none" stroke="#fff" stroke-width="1.7" stroke-linecap="round" stroke-linejoin="round"/></svg></div>
<div class="t" style="left:32.50px;top:88.77px;font-size:13.21px;color:#1c1d22;">bands-api-web</div>
<div class="t" style="right:18.60px;top:91.27px;font-size:9.9px;letter-spacing:0.1px;color:#66749a">537</div>
<div class="abs" style="left:12px;top:114.80px"><svg width="14" height="14" viewBox="0 0 14 14"><rect width="14" height="14" rx="3.2" fill="#5b5fe6"/><path d="M3.6 7.2 L6 9.4 L10.4 4.8" fill="none" stroke="#fff" stroke-width="1.7" stroke-linecap="round" stroke-linejoin="round"/></svg></div>
<div class="t" style="left:32.50px;top:114.77px;font-size:13.38px;color:#1c1d22;">cart</div>
<div class="t" style="right:18.60px;top:117.42px;font-size:9.9px;letter-spacing:0.1px;color:#66749a">8.32K</div>
<div class="abs" style="left:12px;top:140.95px"><svg width="14" height="14" viewBox="0 0 14 14"><rect width="14" height="14" rx="3.2" fill="#5b5fe6"/><path d="M3.6 7.2 L6 9.4 L10.4 4.8" fill="none" stroke="#fff" stroke-width="1.7" stroke-linecap="round" stroke-linejoin="round"/></svg></div>
<div class="t" style="left:32.50px;top:141.29px;font-size:12.95px;color:#1c1d22;">check-limit-request-xx</div>
<div class="t" style="right:18.60px;top:143.57px;font-size:9.9px;letter-spacing:0.1px;color:#66749a">533</div>
</div>
<div class="abs" style="left:418.00px;top:748.60px;width:2.70px;height:150.00px;background:#d0d3dc;border-radius:1.5px"></div>
<div class="abs" style="left:418.00px;top:748.60px;width:2.70px;height:56.20px;background:#7b8299;border-radius:1.5px"></div>
<div class="abs" style="left:434.00px;top:172.00px;width:996.00px;height:740.00px;border:1px solid #e5e9f8;border-radius:8px"></div>
<div class="t" style="left:455.30px;top:184.84px;font-size:13.3px;font-weight:700;color:#5058e0;">Table View</div>
<div class="abs" style="left:455.10px;top:205.80px;width:67.80px;height:2.00px;background:#5b5fe3"></div>
<div class="t" style="left:543.70px;top:185.01px;font-size:13.1px;font-weight:700;color:#5e6b8c;">Raw View</div>
<svg class="abs" style="left:613.6px;top:186.6px" width="6" height="10" viewBox="0 0 6 10"><path d="M3 8.6 V1 M1 3.1 L3 1 L5 3.1" fill="none" stroke="#5e6b8c" stroke-width="0.85" stroke-linecap="round"/></svg>
<svg class="abs" style="left:1406.5px;top:184.5px" width="13" height="13" viewBox="0 0 13 13"><path d="M6.5 0.6 V8.4 M3.4 5.4 L6.5 8.5 L9.6 5.4" fill="none" stroke="#5b5fe3" stroke-width="1.1" stroke-linecap="round" stroke-linejoin="round"/><path d="M0.8 9 V11 Q0.8 12.2 2 12.2 H11 Q12.2 12.2 12.2 11 V9" fill="none" stroke="#5b5fe3" stroke-width="1.1" stroke-linecap="round"/></svg>
<div class="abs" style="left:435.00px;top:208.00px;width:994.00px;height:1.00px;background:#e5e9f8"></div>
<div class="t" style="left:447.40px;top:222.51px;font-size:13.1px;font-weight:700;color:#1b2140;">DateTime</div>
<svg class="abs" style="left:616px;top:224.6px" width="7" height="10" viewBox="0 0 7 10"><path d="M3.5 10 V1 M0.8 3.6 L3.5 0.9 L6.2 3.6" fill="none" stroke="#5e6b8c" stroke-width="1.2"/></svg>
<div class="t" style="left:647.40px;top:222.51px;font-size:13.1px;font-weight:700;color:#1b2140;">Instance</div>
<div class="t" style="left:897.50px;top:222.60px;font-size:13.0px;font-weight:700;color:#1b2140;">Workload</div>
<div class="t" style="left:1147.50px;top:222.60px;font-size:13.0px;font-weight:700;color:#1b2140;">Logs</div>
<div class="abs" style="left:1201.80px;top:215.20px;width:175.20px;height:27.40px;border:1px solid #dde2f6;border-radius:7px"></div>
<div class="abs" style="left:1201.80px;top:215.20px;width:87.40px;height:27.40px;border:1px solid #5b5fe3;border-radius:7px 0 0 7px;background:#e9ebfc"></div>
<div class="t" style="left:1214.90px;top:222.81px;font-size:13.1px;color:#5a5fdb;">Single-line</div>
<div class="t" style="left:1302.00px;top:222.85px;font-size:13.05px;color:#66749a;">Wrap-lines</div>
<div class="abs" style="left:1380.00px;top:208.50px;width:1.00px;height:41.00px;background:#e5e9f8"></div>
<svg class="abs" style="left:1398.5px;top:221px" width="13" height="13" viewBox="0 0 13 13"><rect x="0.5" y="0.5" width="12" height="12" rx="1.8" fill="none" stroke="#a9b6d8" stroke-width="0.9"/><path d="M0.5 5 H12.5 M5 0.5 V12.5" stroke="#a9b6d8" stroke-width="0.8"/></svg>
<div class="abs" style="left:435.00px;top:249.00px;width:994.00px;height:1.00px;background:#e5e9f8"></div>
<div class="abs" style="left:435.1px;top:250px;width:993.7px;height:647.8px;overflow:hidden">
<div class="abs" style="left:0.00px;top:33.00px;width:993.70px;height:1.00px;background:#e8ebf8"></div>
<div class="abs" style="left:11.90px;top:8.60px;width:4.00px;height:15.80px;background:#6f7ae8;border-radius:2px"></div>
<div class="t" style="left:24.30px;top:9.96px;font-size:12.8px;color:#1c1d22;">Mar 17 13:01:07.329</div>
<div class="t" style="left:212.30px;top:9.08px;font-size:14.2px;color:#1c1d22;">datadog-agent-v67n7</div>
<div class="t" style="left:461.90px;top:9.30px;font-size:14.3px;color:#1c1d22;">datadog-agent</div>
<div class="t" style="left:711.50px;top:11.48px;font-family:'Liberation Mono',monospace;font-size:13.02px;color:#1c1d22;transform:scaleY(1.1);transform-origin:0 80%">2026-03-17&nbsp;07:31:07&nbsp;UTC&nbsp;|&nbsp;TRACE&nbsp;|&nbsp;WARN</div>
<div class="abs" style="left:0.00px;top:65.00px;width:993.70px;height:1.00px;background:#e8ebf8"></div>
<div class="abs" style="left:11.90px;top:40.60px;width:4.00px;height:15.80px;background:#6f7ae8;border-radius:2px"></div>
<div class="t" style="left:24.30px;top:41.96px;font-size:12.8px;color:#1c1d22;">Mar 17 13:01:07.329</div>
<div class="t" style="left:212.30px;top:41.08px;font-size:14.2px;color:#1c1d22;">datadog-agent-v67n7</div>
<div class="t" style="left:461.90px;top:41.30px;font-size:14.3px;color:#1c1d22;">datadog-agent</div>
<div class="t" style="left:711.50px;top:43.48px;font-family:'Liberation Mono',monospace;font-size:13.02px;color:#1c1d22;transform:scaleY(1.1);transform-origin:0 80%">2026-03-17&nbsp;07:31:07&nbsp;UTC&nbsp;|&nbsp;TRACE&nbsp;|&nbsp;WARN</div>
<div class="abs" style="left:0.00px;top:97.00px;width:993.70px;height:1.00px;background:#e8ebf8"></div>
<div class="abs" style="left:11.90px;top:72.60px;width:4.00px;height:15.80px;background:#6f7ae8;border-radius:2px"></div>
<div class="t" style="left:24.30px;top:73.96px;font-size:12.8px;color:#1c1d22;">Mar 17 13:01:07.328</div>
<div class="t" style="left:212.30px;top:73.08px;font-size:14.2px;color:#1c1d22;">datadog-agent-v67n7</div>
<div class="t" style="left:461.90px;top:73.30px;font-size:14.3px;color:#1c1d22;">datadog-agent</div>
<div class="t" style="left:711.50px;top:75.48px;font-family:'Liberation Mono',monospace;font-size:13.02px;color:#1c1d22;transform:scaleY(1.1);transform-origin:0 80%">2026-03-17&nbsp;07:31:07&nbsp;UTC&nbsp;|&nbsp;TRACE&nbsp;|&nbsp;WARN</div>
<div class="abs" style="left:0.00px;top:129.00px;width:993.70px;height:1.00px;background:#e8ebf8"></div>
<div class="abs" style="left:11.90px;top:104.60px;width:4.00px;height:15.80px;background:#6f7ae8;border-radius:2px"></div>
<div class="t" style="left:24.30px;top:105.96px;font-size:12.8px;color:#1c1d22;">Mar 17 13:01:07.328</div>
<div class="t" style="left:212.30px;top:105.08px;font-size:14.2px;color:#1c1d22;">datadog-agent-v67n7</div>
<div class="t" style="left:461.90px;top:105.30px;font-size:14.3px;color:#1c1d22;">datadog-agent</div>
<div class="t" style="left:711.50px;top:107.48px;font-family:'Liberation Mono',monospace;font-size:13.02px;color:#1c1d22;transform:scaleY(1.1);transform-origin:0 80%">2026-03-17&nbsp;07:31:07&nbsp;UTC&nbsp;|&nbsp;TRACE&nbsp;|&nbsp;WARN</div>
<div class="abs" style="left:0.00px;top:161.00px;width:993.70px;height:1.00px;background:#e8ebf8"></div>
<div class="abs" style="left:11.90px;top:136.60px;width:4.00px;height:15.80px;background:#a9b6db;border-radius:2px"></div>
<div class="t" style="left:24.30px;top:137.96px;font-size:12.8px;color:#1c1d22;">Mar 17 13:01:07.054</div>
<div class="t" style="left:212.30px;top:137.08px;font-size:14.2px;color:#1c1d22;">check-limit-request-xx-7c788fcc9...</div>
<div class="t" style="left:461.90px;top:137.30px;font-size:14.3px;color:#1c1d22;">check-limit-request-xx</div>
<div class="t" style="left:711.50px;top:139.48px;font-family:'Liberation Mono',monospace;font-size:13.02px;color:#1c1d22;transform:scaleY(1.1);transform-origin:0 80%">Hello&nbsp;from&nbsp;Busybox</div>
<div class="abs" style="left:0.00px;top:193.00px;width:993.70px;height:1.00px;background:#e8ebf8"></div>
<div class="abs" style="left:11.90px;top:168.60px;width:4.00px;height:15.80px;background:#1e88e5;border-radius:2px"></div>
<div class="t" style="left:24.30px;top:169.96px;font-size:12.8px;color:#1c1d22;">Mar 17 13:01:06.898</div>
<div class="t" style="left:212.30px;top:169.08px;font-size:14.2px;color:#1c1d22;">pdcsi-node-59qdd</div>
<div class="t" style="left:461.90px;top:169.30px;font-size:14.3px;color:#1c1d22;">pdcsi-node</div>
<div class="t" style="left:711.50px;top:171.48px;font-family:'Liberation Mono',monospace;font-size:13.02px;color:#1c1d22;transform:scaleY(1.1);transform-origin:0 80%">I0317&nbsp;07:31:06.898217&nbsp;&nbsp;&nbsp;&nbsp;&nbsp;&nbsp;12&nbsp;utils.go</div>
<div class="abs" style="left:0.00px;top:225.00px;width:993.70px;height:1.00px;background:#e8ebf8"></div>
<div class="abs" style="left:11.90px;top:200.60px;width:4.00px;height:15.80px;background:#1e88e5;border-radius:2px"></div>
<div class="t" style="left:24.30px;top:201.96px;font-size:12.8px;color:#1c1d22;">Mar 17 13:01:06.898</div>
<div class="t" style="left:212.30px;top:201.08px;font-size:14.2px;color:#1c1d22;">pdcsi-node-59qdd</div>
<div class="t" style="left:461.90px;top:201.30px;font-size:14.3px;color:#1c1d22;">pdcsi-node</div>
<div class="t" style="left:711.50px;top:203.48px;font-family:'Liberation Mono',monospace;font-size:13.02px;color:#1c1d22;transform:scaleY(1.1);transform-origin:0 80%">I0317&nbsp;07:31:06.897940&nbsp;&nbsp;&nbsp;&nbsp;&nbsp;&nbsp;12&nbsp;utils.go</div>
<div class="abs" style="left:0.00px;top:257.00px;width:993.70px;height:1.00px;background:#e8ebf8"></div>
<div class="abs" style="left:11.90px;top:232.60px;width:4.00px;height:15.80px;background:#1e88e5;border-radius:2px"></div>
<div class="t" style="left:24.30px;top:233.96px;font-size:12.8px;color:#1c1d22;">Mar 17 13:01:06.896</div>
<div class="t" style="left:212.30px;top:233.08px;font-size:14.2px;color:#1c1d22;">pdcsi-node-59qdd</div>
<div class="t" style="left:461.90px;top:233.30px;font-size:14.3px;color:#1c1d22;">pdcsi-node</div>
<div class="t" style="left:711.50px;top:235.48px;font-family:'Liberation Mono',monospace;font-size:13.02px;color:#1c1d22;transform:scaleY(1.1);transform-origin:0 80%">I0317&nbsp;07:31:06.895967&nbsp;&nbsp;&nbsp;&nbsp;&nbsp;&nbsp;12&nbsp;utils.go</div>
<div class="abs" style="left:0.00px;top:289.00px;width:993.70px;height:1.00px;background:#e8ebf8"></div>
<div class="abs" style="left:11.90px;top:264.60px;width:4.00px;height:15.80px;background:#1e88e5;border-radius:2px"></div>
<div class="t" style="left:24.30px;top:265.96px;font-size:12.8px;color:#1c1d22;">Mar 17 13:01:06.896</div>
<div class="t" style="left:212.30px;top:265.08px;font-size:14.2px;color:#1c1d22;">pdcsi-node-59qdd</div>
<div class="t" style="left:461.90px;top:265.30px;font-size:14.3px;color:#1c1d22;">pdcsi-node</div>
<div class="t" style="left:711.50px;top:267.48px;font-family:'Liberation Mono',monospace;font-size:13.02px;color:#1c1d22;transform:scaleY(1.1);transform-origin:0 80%">I0317&nbsp;07:31:06.895781&nbsp;&nbsp;&nbsp;&nbsp;&nbsp;&nbsp;12&nbsp;utils.go</div>
<div class="abs" style="left:0.00px;top:321.00px;width:993.70px;height:1.00px;background:#e8ebf8"></div>
<div class="abs" style="left:11.90px;top:296.60px;width:4.00px;height:15.80px;background:#1e88e5;border-radius:2px"></div>
<div class="t" style="left:24.30px;top:297.96px;font-size:12.8px;color:#1c1d22;">Mar 17 13:01:06.808</div>
<div class="t" style="left:212.30px;top:297.08px;font-size:14.2px;color:#1c1d22;">sre-agent-7c859f857d-hrj6j</div>
<div class="t" style="left:461.90px;top:297.30px;font-size:14.3px;color:#1c1d22;">sre-agent</div>
<div class="t" style="left:711.50px;top:299.48px;font-family:'Liberation Mono',monospace;font-size:13.02px;color:#1c1d22;transform:scaleY(1.1);transform-origin:0 80%">INFO:&nbsp;&nbsp;&nbsp;&nbsp;&nbsp;10.32.3.1:52214&nbsp;-&nbsp;"GET&nbsp;/&nbsp;HTTP/1.1"</div>
<div class="abs" style="left:0.00px;top:353.00px;width:993.70px;height:1.00px;background:#e8ebf8"></div>
<div class="abs" style="left:11.90px;top:328.60px;width:4.00px;height:15.80px;background:#a9b6db;border-radius:2px"></div>
<div class="t" style="left:24.30px;top:329.96px;font-size:12.8px;color:#1c1d22;">Mar 17 13:01:06.693</div>
<div class="t" style="left:212.30px;top:329.08px;font-size:14.2px;color:#1c1d22;">php-sample-app-7878547dc9-cb5...</div>
<div class="t" style="left:461.90px;top:329.30px;font-size:14.3px;color:#1c1d22;">php-sample-app</div>
<div class="t" style="left:711.50px;top:331.48px;font-family:'Liberation Mono',monospace;font-size:13.02px;color:#1c1d22;transform:scaleY(1.1);transform-origin:0 80%">10.32.3.1&nbsp;-&nbsp;-&nbsp;[17/Mar/2026:07:31:06&nbsp;+0000]</div>
<div class="abs" style="left:0.00px;top:385.00px;width:993.70px;height:1.00px;background:#e8ebf8"></div>
<div class="t" style="left:24.30px;top:361.96px;font-size:12.8px;color:#1c1d22;">Mar 17 13:01:06.571</div>
<div class="t" style="left:212.30px;top:361.08px;font-size:14.2px;color:#1c1d22;">three-tier-app-deployment-5584df...</div>
<div class="t" style="left:461.90px;top:361.30px;font-size:14.3px;color:#1c1d22;">three-tier-app-deployment</div>
<div class="t" style="left:711.50px;top:363.48px;font-family:'Liberation Mono',monospace;font-size:13.02px;color:#1c1d22;transform:scaleY(1.1);transform-origin:0 80%">[Tue&nbsp;Mar&nbsp;17&nbsp;07:31:06.569893&nbsp;2026]&nbsp;[php]</div>
<div class="abs" style="left:0.00px;top:417.00px;width:993.70px;height:1.00px;background:#e8ebf8"></div>
<div class="t" style="left:24.30px;top:393.96px;font-size:12.8px;color:#1c1d22;">Mar 17 13:01:06.571</div>
<div class="t" style="left:461.90px;top:393.30px;font-size:14.3px;color:#1c1d22;">three-tier-app-deployment</div>
<div class="t" style="left:711.50px;top:395.48px;font-family:'Liberation Mono',monospace;font-size:13.02px;color:#1c1d22;transform:scaleY(1.1);transform-origin:0 80%">[Tue&nbsp;Mar&nbsp;17&nbsp;07:31:06.569726&nbsp;2026]&nbsp;[php]</div>
<div class="abs" style="left:0.00px;top:449.00px;width:993.70px;height:1.00px;background:#e8ebf8"></div>
<div class="t" style="left:24.30px;top:425.96px;font-size:12.8px;color:#1c1d22;">Mar 17 13:01:06.571</div>
<div class="t" style="left:461.90px;top:425.30px;font-size:14.3px;color:#1c1d22;">three-tier-app-deployment</div>
<div class="t" style="left:711.50px;top:427.48px;font-family:'Liberation Mono',monospace;font-size:13.02px;color:#1c1d22;transform:scaleY(1.1);transform-origin:0 80%">[Tue&nbsp;Mar&nbsp;17&nbsp;07:31:06.569626&nbsp;2026]&nbsp;[php]</div>
<div class="abs" style="left:0.00px;top:450.00px;width:993.70px;height:31.00px;background:#f8f9fe"></div>
<div class="abs" style="left:0.00px;top:481.00px;width:993.70px;height:1.00px;background:#e8ebf8"></div>
<div class="t" style="left:24.30px;top:457.96px;font-size:12.8px;color:#1c1d22;">Mar 17 13:01:06.571</div>
<div class="t" style="left:212.30px;top:457.08px;font-size:14.2px;color:#1c1d22;">three-tier-app-deployment-5584df...</div>
<div class="t" style="left:461.90px;top:457.30px;font-size:14.3px;color:#1c1d22;">three-tier-app-deployment</div>
<div class="t" style="left:711.50px;top:459.48px;font-family:'Liberation Mono',monospace;font-size:13.02px;color:#1c1d22;transform:scaleY(1.1);transform-origin:0 80%">[Tue&nbsp;Mar&nbsp;17&nbsp;07:31:06.569478&nbsp;2026]&nbsp;[php]</div>
<div class="abs" style="left:0.00px;top:513.00px;width:993.70px;height:1.00px;background:#e8ebf8"></div>
<div class="t" style="left:24.30px;top:489.96px;font-size:12.8px;color:#1c1d22;">Mar 17 13:01:06.571</div>
<div class="t" style="left:212.30px;top:489.08px;font-size:14.2px;color:#1c1d22;">three-tier-app-deployment-5584df...</div>
<div class="t" style="left:461.90px;top:489.30px;font-size:14.3px;color:#1c1d22;">three-tier-app-deployment</div>
<div class="t" style="left:711.50px;top:491.48px;font-family:'Liberation Mono',monospace;font-size:13.02px;color:#1c1d22;transform:scaleY(1.1);transform-origin:0 80%">[Tue&nbsp;Mar&nbsp;17&nbsp;07:31:06.569090&nbsp;2026]&nbsp;[php]</div>
<div class="abs" style="left:0.00px;top:545.00px;width:993.70px;height:1.00px;background:#e8ebf8"></div>
<div class="t" style="left:24.30px;top:521.96px;font-size:12.8px;color:#1c1d22;">Mar 17 13:01:06.571</div>
<div class="t" style="left:212.30px;top:521.08px;font-size:14.2px;color:#1c1d22;">three-tier-app-deployment-5584df...</div>
<div class="t" style="left:461.90px;top:521.30px;font-size:14.3px;color:#1c1d22;">three-tier-app-deployment</div>
<div class="t" style="left:711.50px;top:523.48px;font-family:'Liberation Mono',monospace;font-size:13.02px;color:#1c1d22;transform:scaleY(1.1);transform-origin:0 80%">[Tue&nbsp;Mar&nbsp;17&nbsp;07:31:06.567995&nbsp;2026]&nbsp;[php]</div>
<div class="abs" style="left:0.00px;top:577.00px;width:993.70px;height:1.00px;background:#e8ebf8"></div>
<div class="abs" style="left:11.90px;top:552.60px;width:4.00px;height:15.80px;background:#a9b6db;border-radius:2px"></div>
<div class="t" style="left:24.30px;top:553.96px;font-size:12.8px;color:#1c1d22;">Mar 17 13:01:06.571</div>
<div class="t" style="left:212.30px;top:553.08px;font-size:14.2px;color:#1c1d22;">three-tier-app-deployment-5584df...</div>
<div class="t" style="left:461.90px;top:553.30px;font-size:14.3px;color:#1c1d22;">three-tier-app-deployment</div>
<div class="t" style="left:711.50px;top:555.48px;font-family:'Liberation Mono',monospace;font-size:13.02px;color:#1c1d22;transform:scaleY(1.1);transform-origin:0 80%">10.32.3.1&nbsp;-&nbsp;-&nbsp;[17/Mar/2026:07:31:06&nbsp;+0000]</div>
<div class="abs" style="left:0.00px;top:609.00px;width:993.70px;height:1.00px;background:#e8ebf8"></div>
<div class="t" style="left:24.30px;top:585.96px;font-size:12.8px;color:#1c1d22;">Mar 17 13:01:06.571</div>
<div class="t" style="left:212.30px;top:585.08px;font-size:14.2px;color:#1c1d22;">three-tier-app-deployment-5584df...</div>
<div class="t" style="left:461.90px;top:585.30px;font-size:14.3px;color:#1c1d22;">three-tier-app-deployment</div>
<div class="t" style="left:711.50px;top:587.48px;font-family:'Liberation Mono',monospace;font-size:13.02px;color:#1c1d22;transform:scaleY(1.1);transform-origin:0 80%">[Tue&nbsp;Mar&nbsp;17&nbsp;07:31:06.568191&nbsp;2026]&nbsp;[php]</div>
<div class="abs" style="left:0.00px;top:641.00px;width:993.70px;height:1.00px;background:#e8ebf8"></div>
<div class="abs" style="left:11.90px;top:616.60px;width:4.00px;height:15.80px;background:#a9b6db;border-radius:2px"></div>
<div class="t" style="left:24.30px;top:617.96px;font-size:12.8px;color:#1c1d22;">Mar 17 13:01:06.563</div>
<div class="t" style="left:212.30px;top:617.08px;font-size:14.2px;color:#1c1d22;">my-hyperdx-hdx-oss-v2-mongod...</div>
<div class="t" style="left:461.90px;top:617.30px;font-size:14.3px;color:#1c1d22;">my-hyperdx-hdx-oss-v2-mongodb</div>
<div class="t" style="left:711.50px;top:619.48px;font-family:'Liberation Mono',monospace;font-size:13.02px;color:#1c1d22;transform:scaleY(1.1);transform-origin:0 80%">{"t":{"$date":"2026-03-17T07:31:06.5</div>
</div>
<div class="abs" style="left:179.00px;top:864.00px;width:1.00px;height:36.00px;background:#f1f1f4"></div>
<div class="abs" style="left:179.00px;top:897.80px;width:1261.00px;height:2.20px;background:#f4f4fd"></div>
<div class="abs" style="left:635.20px;top:640.00px;width:249.40px;height:52.30px;background:#000;border-radius:8px;box-shadow:0 6px 16px rgba(0,0,0,0.18)"></div>
<svg class="abs" style="left:753.5px;top:692.2px" width="13" height="6" viewBox="0 0 13 6"><path d="M0 0 H13 L7.4 5.3 Q6.5 6 5.6 5.3Z" fill="#1f1f1f"/></svg>
<div class="t" style="left:635.2px;width:249.4px;text-align:center;top:650.04px;font-size:13.3px;color:#fff">three-tier-app-deployment-5584dfc67-</div>
<div class="t" style="left:635.2px;width:249.4px;text-align:center;top:667.54px;font-size:13.3px;color:#fff">q24zd</div>
</div><!--ENDMAIN-->

</div></body></html>
